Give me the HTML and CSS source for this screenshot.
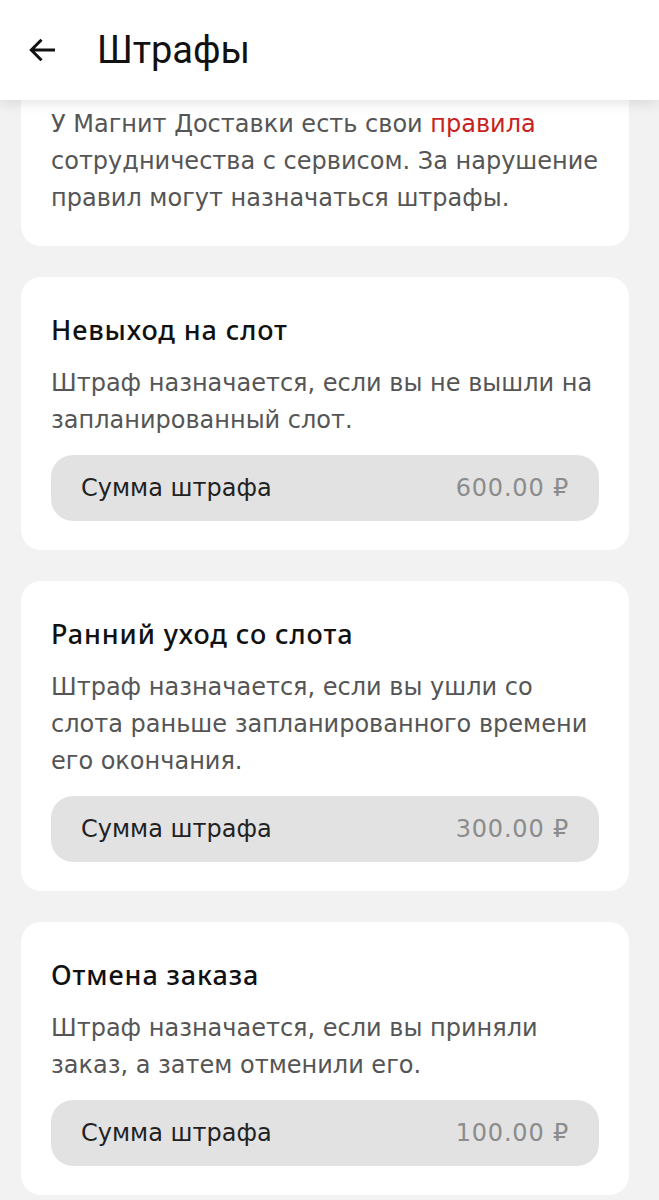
FILE: index.html
```html
<!DOCTYPE html>
<html lang="ru">
<head>
    <meta charset="UTF-8">
    <meta name="viewport" content="width=device-width, initial-scale=1.0">
    <title>Штрафы</title>
    <link rel="stylesheet" href="styles.css">
</head>
<body>
    <header class="topbar">
        <button class="back" aria-label="Назад">
            <svg width="36" height="36" viewBox="0 0 24 24">
                <path d="M20 12H4.8M11 5.2L4.2 12l6.8 6.8" fill="none" stroke="#111" stroke-width="2"/>
            </svg>
        </button>
        <h1>Штрафы</h1>
    </header>

    <main class="list">
        <section class="card card-intro">
            <p class="text">У Магнит Доставки есть свои <a href="#" class="link">правила</a> сотрудничества с сервисом. За нарушение правил могут назначаться штрафы.</p>
        </section>

        <section class="card">
            <h2>Невыход на слот</h2>
            <p class="text">Штраф назначается, если вы не вышли на запланированный слот.</p>
            <div class="sum">
                <span>Сумма штрафа</span>
                <span class="amount">600.00 ₽</span>
            </div>
        </section>

        <section class="card">
            <h2>Ранний уход со слота</h2>
            <p class="text">Штраф назначается, если вы ушли со слота раньше запланированного времени его окончания.</p>
            <div class="sum">
                <span>Сумма штрафа</span>
                <span class="amount">300.00 ₽</span>
            </div>
        </section>

        <section class="card">
            <h2>Отмена заказа</h2>
            <p class="text">Штраф назначается, если вы приняли заказ, а затем отменили его.</p>
            <div class="sum">
                <span>Сумма штрафа</span>
                <span class="amount">100.00 ₽</span>
            </div>
        </section>
    </main>
</body>
</html>
```

FILE: styles.css
```css
body {
    margin: 0;
    background: #f2f2f2;
    font-family: "DejaVu Sans", "Noto Sans", sans-serif;
    color: #111;
}
.topbar {
    position: relative;
    z-index: 1;
    height: 100px;
    display: flex;
    align-items: center;
    background: white;
    box-shadow: 0 2px 14px rgba(0,0,0,0.12);
}
.back {
    background: none;
    border: none;
    padding: 0;
    margin: 0 0 0 25px;
    width: 36px;
    height: 36px;
    display: flex;
    cursor: pointer;
}
.topbar h1 {
    margin: 0 0 0 36px;
    font-family: Roboto, sans-serif;
    font-size: 38px;
    font-weight: 400;
    color: #111;
}
.list {
    display: flex;
    flex-direction: column;
    gap: 31px;
    padding: 0 30px 0 21px;
}
.card {
    background: white;
    border-radius: 20px;
    padding: 36px 30px 29px;
}
.card-intro {
    border-radius: 0 0 20px 20px;
    padding-top: 6px;
}
.card h2 {
    margin: 0 0 18px;
    font-family: "Noto Sans", sans-serif;
    font-size: 27px;
    line-height: 34px;
    font-weight: 500;
    letter-spacing: 0.9px;
    color: #111;
}
.text {
    margin: 0;
    font-size: 24px;
    line-height: 37px;
    color: #555;
}
.link {
    color: #c9211e;
    text-decoration: none;
}
.sum {
    margin-top: 16px;
    height: 66px;
    display: flex;
    align-items: center;
    justify-content: space-between;
    padding: 0 30px;
    border-radius: 22px;
    background: #e2e2e2;
    font-size: 24px;
    color: #222;
}
.amount {
    color: #8c8c8c;
    letter-spacing: 0.8px;
}
```
